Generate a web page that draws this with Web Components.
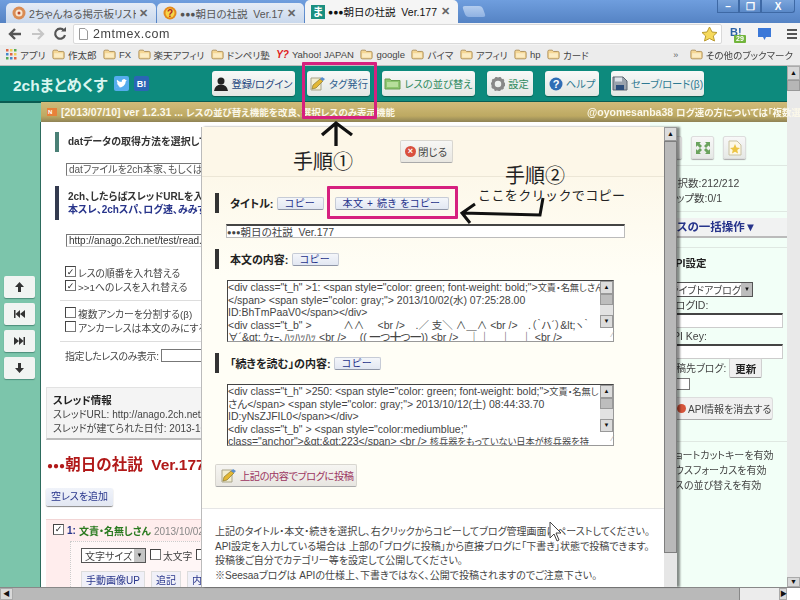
<![CDATA[<!DOCTYPE html>
<html lang="ja"><head><meta charset="utf-8"><title>2chまとめくす</title>
<style>
html,body{margin:0;padding:0;background:#fff;overflow:hidden}
body{font:10px "Liberation Sans","Noto Sans CJK JP",sans-serif;color:#333}
</style></head><body>
<x-app>
  <x-tabs></x-tabs>
  <x-toolbar></x-toolbar>
  <x-bookmarks></x-bookmarks>
  <x-page></x-page>
  <x-hscroll></x-hscroll>
  <x-modal></x-modal>
  <x-notes></x-notes>
</x-app>
<script>
const FONT='"Liberation Sans","Noto Sans CJK JP",sans-serif';
const def=(n,css,html)=>customElements.define(n,class extends HTMLElement{constructor(){super();this.attachShadow({mode:'open'}).innerHTML=`<style>${css}</style>${html}`}});
const folder=`<svg width="13" height="11" viewBox="0 0 15 12" style="display:block"><path d="M1 2.5Q1 1 2.5 1H6L7.5 2.5H12.5Q14 2.5 14 4V9.5Q14 11 12.5 11H2.5Q1 11 1 9.5Z" fill="#f5d795" stroke="#a98a52"/><rect x="2.5" y="4.5" width="10" height="5" fill="#fcecc3"/></svg>`;
const pen=`<svg width="17" height="16" viewBox="0 0 17 16" style="display:block;flex:none"><path d="M2 2H12V14H2Z" fill="#f2edd0" stroke="#a9a58a"/><path d="M3 13 4 9 11 3 14 5 7 12Z" fill="#e3b733" stroke="#8a7a33" stroke-width=".7"/><path d="M11 3 13 1 16 3 14 5Z" fill="#5b8ecc"/></svg>`;
const bar=(c,h,extra='')=>`<i style="display:block;width:4px;height:${h}px;background:${c};flex:none;${extra}"></i>`;
const dots=s=>`<span style="font-size:${s}px;vertical-align:1px">●●●</span>`;
const cjk=(t,s=9.5)=>`<span style="font-size:${s}px">${t}</span>`;

def('x-app',`:host{display:flex;flex-direction:column;position:relative;width:800px;height:600px;overflow:hidden;filter:blur(.35px);font:10px ${FONT};font-feature-settings:"palt";color:#333}`,`<slot></slot>`);

def('x-tab',`:host{display:flex;align-items:center;gap:3px;box-sizing:border-box;height:20px;padding:0 8px 0 6px;background:linear-gradient(#e5ecf6,#c9d8ec);border-radius:5px 5px 0 0;font-size:10.500px;color:#555;white-space:nowrap;overflow:hidden}
:host([active]){background:#f5f5f5;color:#111;height:23px}
.t{flex:1;overflow:hidden}.x{font-size:11px;font-weight:bold;color:#666;flex:none}`,`<slot name="i"></slot><span class="t"><slot></slot></span><span class="x">✕</span>`);

def('x-tabs',`:host{display:flex;align-items:flex-end;height:23px;background:linear-gradient(#6f9ede,#5583c4);padding-left:6px;box-sizing:border-box;flex:none;position:relative}
x-tab{width:150px;margin-right:1px}
x-tab.c{width:147px;margin-right:1px}
x-tab[active]{width:153px;margin-right:3px}
.new{width:20px;height:11px;margin:0 0 6px 3px;background:linear-gradient(#b4cdee,#8fb1e2);border-radius:3px;transform:skewX(20deg)}
.win{position:absolute;right:5px;top:0;display:flex;height:13px}
.win span{display:flex;align-items:center;justify-content:center;width:22px;height:13px;background:linear-gradient(#7ba5dc,#5a89c8);border:1px solid #3e69a5;border-top:0;box-sizing:border-box;color:#fff;font-size:10px;font-weight:bold}
.win .c2{width:34px;border-radius:0 0 3px 0;background:linear-gradient(#7ba5dc,#5a89c8)}`,
`<x-tab><svg slot="i" width="14" height="14" viewBox="0 0 14 14"><circle cx="7" cy="7" r="6.5" fill="#d98c54"/><circle cx="7" cy="7" r="3.5" fill="#f8e6cf"/><circle cx="7" cy="7" r="1.5" fill="#b9482e"/></svg>2ちゃんねる掲示板リスト</x-tab>
<x-tab class="c"><svg slot="i" width="14" height="14" viewBox="0 0 14 14"><circle cx="7" cy="7" r="6.5" fill="#e48a1c"/><circle cx="7" cy="7" r="4.5" fill="#f7d54a"/><text x="7" y="10.5" text-anchor="middle" font-size="10" font-weight="bold" fill="#b3261e" font-family="Liberation Sans">?</text></svg>${dots(8.5)}朝日の社説&nbsp; Ver.177</x-tab>
<x-tab class="c" active><svg slot="i" width="14" height="14" viewBox="0 0 14 14"><rect width="14" height="14" fill="#1a8f80"/><text x="7" y="11" text-anchor="middle" font-size="11" font-weight="bold" fill="#fff" font-family="Noto Sans CJK JP">ま</text></svg>${dots(8.5)}朝日の社説&nbsp; Ver.177</x-tab>
<div class="new"></div>
<div class="win"><span>–</span><span>❐</span><span class="c2">X</span></div>`);

def('x-toolbar',`:host{display:flex;align-items:center;height:22px;background:#f4f4f4;flex:none;box-sizing:border-box;padding-left:7px}
svg{flex:none}.nav{display:flex;gap:7px;width:66px;flex:none;align-items:center}
.addr{display:flex;align-items:center;gap:5px;box-sizing:border-box;width:649px;height:20px;background:#fff;border:1px solid #d9d9d9;border-radius:2px;padding-left:5px;font-size:12.5px;color:#444;letter-spacing:.55px;position:relative;flex:none}
.star{position:absolute;right:3px;top:1px}
.r{display:flex;align-items:center;margin-left:8px;gap:11px}
.badge{position:relative;font:bold 11px "Liberation Sans";color:#2c62a6;width:16px;height:16px}
.badge b{position:absolute;left:4px;top:9px;background:#72b53c;color:#fff;font-size:7px;padding:0 2px;line-height:8px;border-radius:1px}`,
`<div class="nav">
<svg width="16" height="14" viewBox="0 0 16 14"><path d="M14 7H4M8 2 3 7l5 5" fill="none" stroke="#555" stroke-width="2.4"/></svg>
<svg width="16" height="14" viewBox="0 0 16 14"><path d="M2 7H12M8 2l5 5-5 5" fill="none" stroke="#c6c6c6" stroke-width="2.2"/></svg>
<svg width="14" height="14" viewBox="0 0 14 14"><path d="M12 8A5 5 0 1 1 11 3.5" fill="none" stroke="#555" stroke-width="2.2"/><path d="M8 4.5H13V0Z" fill="#555"/></svg></div>
<div class="addr"><svg width="9" height="12" viewBox="0 0 9 12"><path d="M.5.5H6L8.500 3V11.500H.5Z" fill="#fff" stroke="#999"/></svg>2mtmex.com
<svg class="star" width="17" height="16" viewBox="0 0 17 16"><path d="M8.500 1 11 6 16 6.500 12.300 10 13.500 15 8.500 12.500 3.500 15 4.700 10 1 6.500 6 6Z" fill="#f6d95b" stroke="#b99a2e"/></svg></div>
<div class="r"><span class="badge">B!<b>29</b></span>
<svg width="15" height="14" viewBox="0 0 15 14"><path d="M1 1H14V10H9L7.500 13 6 10H1Z" fill="#3b78d8"/></svg>
<svg width="12" height="12" viewBox="0 0 12 12" style="margin-left:3px"><path d="M1 2H11M1 6H11M1 10H11" stroke="#555" stroke-width="2.200"/></svg></div>`);

def('x-bm',`:host{display:flex;align-items:center;gap:3px;font-size:9.500px;color:#444;white-space:nowrap;flex:none}`,`<slot name="i"></slot><slot></slot>`);
def('x-bookmarks',`:host{display:flex;align-items:center;height:21px;background:#ececec;flex:none;box-sizing:border-box;padding:0 7px 1px 6px;gap:6.500px;border-bottom:1px solid #bdbdbd}
.sp{flex:1}.more{font-size:9px;color:#666;margin-right:5px}`,
`<x-bm><svg slot="i" width="11" height="11" viewBox="0 0 11 11"><rect width="2.500" height="2.500" fill="#d64"/><rect x="4" width="2.500" height="2.500" fill="#ec5"/><rect x="8" width="2.500" height="2.500" fill="#5a5"/><rect y="4" width="2.500" height="2.500" fill="#48c"/><rect x="4" y="4" width="2.500" height="2.500" fill="#d64"/><rect x="8" y="4" width="2.500" height="2.500" fill="#ec5"/><rect y="8" width="2.500" height="2.500" fill="#5a5"/><rect x="4" y="8" width="2.500" height="2.500" fill="#48c"/><rect x="8" y="8" width="2.500" height="2.500" fill="#d64"/></svg>アプリ</x-bm>
<x-bm><span slot="i">${folder}</span>作太郎</x-bm><x-bm><span slot="i">${folder}</span>FX</x-bm><x-bm><span slot="i">${folder}</span>楽天アフィリ</x-bm><x-bm><span slot="i">${folder}</span>ドンペリ塾</x-bm>
<x-bm><b slot="i" style="color:#e0201b;font:italic bold 10px 'Liberation Sans'">Y?</b>Yahoo! JAPAN</x-bm>
<x-bm><span slot="i">${folder}</span>google</x-bm><x-bm><span slot="i">${folder}</span>バイマ</x-bm><x-bm><span slot="i">${folder}</span>アフィリ</x-bm><x-bm><span slot="i">${folder}</span>hp</x-bm><x-bm><span slot="i">${folder}</span>カード</x-bm>
<span class="sp"></span><span class="more">»</span><x-bm><span slot="i">${folder}</span>その他のブックマーク</x-bm>`);

def('x-hbtn',`:host{display:inline-flex;align-items:center;justify-content:center;gap:3px;box-sizing:border-box;height:25px;background:linear-gradient(#f8f9f8,#e2e7e4);border-radius:3px;box-shadow:0 1px 1px #0a5a50;font-size:10.300px;color:var(--c,#1c6a74);white-space:nowrap}`,`<slot name="i"></slot><slot></slot>`);
def('x-sitehead',`:host{display:flex;align-items:center;height:36px;background:#0d8a7d;box-sizing:border-box;border-bottom:1px solid #0a5c52;flex:none;position:relative}
.logo{font-size:15.500px;font-weight:bold;color:#d8f5ef;margin-left:13px;width:101px;white-space:nowrap;flex:none}
.soc{display:inline-flex;width:15px;height:15px;background:#55acee;border-radius:2px;align-items:center;justify-content:center;flex:none}
.h{background:#2a65b5;color:#fff;font:bold 9px "Liberation Sans";margin-left:5px}
.btns{display:flex;margin-left:63px;gap:12px}`,
`<span class="logo">2chまとめくす</span>
<span class="soc"><svg width="11" height="9" viewBox="0 0 11 9"><path d="M0 8Q4 9.500 7.500 7 10 4.500 9.800 2L11 1 9.700 1.100Q8.500-.5 6.800.5 5.300 1.500 5.800 3 3 3 1 .7.300 3 2 4.300L1 4Q1.300 6 3 6.500L2 6.600Q3 8 4 8 2 9 0 8Z" fill="#fff"/></svg></span>
<span class="soc h">B!</span>
<div class="btns">
<x-hbtn style="width:83px;--c:#26477f"><svg slot="i" width="14" height="14" viewBox="0 0 14 14" style="flex:none"><circle cx="7" cy="4" r="3.500" fill="#222"/><path d="M0 14Q1 7.500 7 7.500T14 14Z" fill="#222"/></svg>登録/ログイン</x-hbtn>
<x-hbtn style="width:63px;--c:#2e5f8e"><span slot="i">${pen}</span>タグ発行</x-hbtn>
<x-hbtn style="width:93px;--c:#2f8a5e"><svg slot="i" width="17" height="13" viewBox="0 0 17 13"><path d="M1 2H6L7 3.500H16V12H1Z" fill="#8dc66f" stroke="#6a9e52"/><rect x="3" y="5" width="11" height="5" fill="#b7de9c"/></svg>レスの並び替え</x-hbtn>
<x-hbtn style="width:46px;--c:#2f8a5e"><svg slot="i" width="14" height="14" viewBox="0 0 14 14"><circle cx="7" cy="7" r="5" fill="none" stroke="#888" stroke-width="3.500"/><circle cx="7" cy="7" r="6.600" fill="none" stroke="#888" stroke-width="1.400" stroke-dasharray="2 2"/></svg>設定</x-hbtn>
<x-hbtn style="width:54px;--c:#2f7a92"><svg slot="i" width="14" height="14" viewBox="0 0 14 14"><circle cx="7" cy="7" r="6.500" fill="#2f6db5"/><text x="7" y="11" text-anchor="middle" fill="#fff" font-size="11" font-weight="bold" font-family="Liberation Sans">?</text></svg>ヘルプ</x-hbtn>
<x-hbtn style="width:93px;--c:#2f7a92"><svg slot="i" width="16" height="15" viewBox="0 0 16 15" style="flex:none"><path d="M1 1H11L15 5V14H1Z" fill="#9aa3ad" stroke="#5a6470"/><rect x="4" y="9" width="8" height="5" fill="#2c4f7c"/><rect x="3" y="1.500" width="7" height="4" fill="#dfe4ea"/></svg>セーブ/ロード(β)</x-hbtn>
</div>`);

def('x-news',`:host{display:flex;align-items:center;box-sizing:border-box;height:20px;background:linear-gradient(#d0bb7a,#bda962 70%,#8f8355);padding:0 0 1px 6px;font-size:10.500px;font-weight:bold;color:#fbf8ea;white-space:nowrap;overflow:hidden;flex:none;gap:4px}
.n{background:#e8813a;color:#fff;font-size:6px;padding:1px;width:10px;overflow:hidden;box-sizing:border-box;height:8px;line-height:6px;flex:none}
.r{position:absolute;left:587px}`,`<span class="n">N</span><span>[2013/07/10] ver 1.2.31 ... ${cjk('レスの並び替え機能を改良、選択レスのみ表示機能')}</span><span class="r">@oyomesanba38 ${cjk('ログ速の方については「複数選択」')}</span>`);

def('x-rail',`:host{display:flex;flex-direction:column;justify-content:flex-start;gap:5px;box-sizing:border-box;width:41px;background:#7cc5ab;border-right:1px solid #2d6b5d;padding:154px 0 0 4px;flex:none}
span{display:flex;align-items:center;justify-content:center;width:31px;height:22px;background:#f1f4f2;border-radius:2px;box-shadow:0 1px 1px #4d8d7a}`,
`<span><svg width="9" height="10" viewBox="0 0 9 10"><path d="M4.500 0 9 5H6V10H3V5H0Z" fill="#333"/></svg></span>
<span><svg width="11" height="8" viewBox="0 0 11 8"><path d="M0 0H1.500V8H0ZM6 0V8L1.500 4ZM11 0V8L6 4Z" fill="#333"/></svg></span>
<span><svg width="11" height="8" viewBox="0 0 11 8"><path d="M11 0H9.500V8H11ZM5 0V8L9.500 4ZM0 0V8L5 4Z" fill="#333"/></svg></span>
<span><svg width="9" height="10" viewBox="0 0 9 10"><path d="M4.500 10 9 5H6V0H3V5H0Z" fill="#333"/></svg></span>`);

def('x-check',`:host{display:flex;align-items:center;gap:2px;font-size:9.800px;color:#444;white-space:nowrap;height:14px}
i{width:9px;height:9px;border:1px solid #777;border-top-color:#444;border-left-color:#444;background:#fff;display:flex;align-items:center;justify-content:center;flex:none;margin-top:-3px;font:bold 9px "DejaVu Sans";color:#222}`,`<i id="b"></i><slot></slot>`);

def('x-main',`:host{display:block;box-sizing:border-box;width:609px;flex:none;background:#fff;padding:10px 0 0 5px;overflow:hidden;font-size:10px;color:#444}
.row{display:flex;gap:5px;margin:0 0 0 9px;font-weight:bold;color:#333;white-space:nowrap;line-height:13px}
.sel{box-sizing:border-box;margin:11px 0 10px 20px;width:400px;height:13px;border:1px solid #777;border-right-color:#ccc;border-bottom-color:#ccc;font-size:10px;color:#555;line-height:11px;padding-left:2px;white-space:nowrap;overflow:hidden}
.inp{margin:14px 0 19px 20px;color:#333}
a{color:#27348b;font-weight:bold}
.checks{margin-left:19px}
.hr{border-top:1px solid #ddd;margin:6px 0 6px 14px}
.filter{margin:1px 0 0 19px;display:flex;align-items:center;gap:2px;font-size:10px;height:14px;letter-spacing:-.4px}
.filter i{display:inline-block;width:60px;height:11px;border:1px solid #777}
.info{margin:25px 0 0 0;box-sizing:border-box;height:53px;padding:5px 6px;background:#f4f4f4;border:1px solid #e2e2e2;border-bottom:2px solid #bbb;font-size:10px;line-height:14.500px;white-space:nowrap}
.info b{display:block;color:#222;font-size:10.500px}
h1{margin:13px 0 10px 1px;font:bold 15.500px/24px ${FONT};color:#b11919;white-space:nowrap}
.empty{display:inline-block;padding:0 5px;height:18px;line-height:18px;background:linear-gradient(#f0f3fa,#e2e7f2);box-shadow:0 1px 1px #888;color:#27348b;font-size:10px;border-radius:2px}
.res{margin-top:13px;background:#ffeded;padding:3px 0 0 7px;height:70px;box-sizing:border-box;border-top:1px solid #f2d5d5}
.hd{display:flex;gap:3px;align-items:center;white-space:nowrap;font-weight:bold;color:#2a7a1f;font-size:10px}
.hd .n{color:#27348b}.hd .d{color:#888;font-weight:normal;font-size:10px}
.inner{margin:3px 0 0 17px;background:#fff6f6;border:1px dotted #ccc;padding:6px 10px;height:50px;box-sizing:border-box}
.l{display:flex;align-items:center;gap:4px;white-space:nowrap}
.s{box-sizing:border-box;width:65px;height:15px;border:1px solid #555;background:#fff;display:flex;align-items:center;justify-content:space-between;font-size:10px;padding-left:3px;color:#444}
.s u{width:11px;height:13px;background:#c4c4c4;text-decoration:none;font-size:6px;text-align:center;line-height:13px;color:#111}
.b{display:flex;gap:6px;margin-top:8px}
.b span{background:#f0f0f8;padding:0 4px;height:17px;line-height:17px;color:#27348b;border:1px solid #ddd;box-sizing:border-box;font-size:10px}`,
`<div class="row">${bar('#4a8076',20)}<span style="margin-left:4px;line-height:20px">datデータの取得方法を選択してください</span></div>
<div class="sel">datファイルを2ch本家、もしくは他のサイトから取得する</div>
<div class="row" style="align-items:flex-start">${bar('#333a4f',34)}<span style="margin-left:4px;padding-top:4px">2ch、したらばスレッドURLを入力してください<br><a>本スレ、2chスパ、ログ速、みみずん</a></span></div>
<div class="sel inp">http://anago.2ch.net/test/read.cgi/bookall/1380666328/</div>
<div class="checks"><x-check>レスの順番を入れ替える</x-check><x-check>&gt;&gt;1へのレスを入れ替える</x-check></div>
<div class="hr"></div>
<div class="checks"><x-check class="off">複数アンカーを分割する(β)</x-check><x-check class="off">アンカーレスは本文のみにする</x-check></div>
<div class="hr"></div>
<div class="filter">指定したレスのみ表示: <i></i></div>
<div class="info"><b>スレッド情報</b>スレッドURL: http://anago.2ch.net/test/read.cgi/bookall/1380666328/<br>スレッドが建てられた日付: 2013-10-02</div>
<h1>${dots(10)}朝日の社説&nbsp; Ver.177</h1>
<span class="empty">空レスを追加</span>
<div class="res"><div class="hd"><x-check id="c1"></x-check><span class="n">1:</span><span>文責・名無しさん</span><span class="d">2013/10/02(水) 07:25:28.00</span></div>
<div class="inner"><div class="l"><div class="s">文字サイズ<u>▼</u></div><x-check class="off">太文字</x-check><x-check class="off">色</x-check></div>
<div class="b"><span>手動画像UP</span><span>追記</span><span>内容編集</span></div></div></div>`);

def('x-right',`:host{display:block;box-sizing:border-box;width:137px;flex:none;background:#f2fff7;padding:14px 4px 0 16px;font-size:10.500px;color:#444;overflow:hidden}
.ic{display:flex;gap:9px;height:23px}
.ic span{display:flex;align-items:center;justify-content:center;width:23px;height:23px;background:linear-gradient(#f8f8f8,#e6e9e6);border:1px solid #ddd;box-sizing:border-box;border-radius:2px;box-shadow:0 1px 1px #aaa;flex:none}
.ic span:first-child{margin-left:-7px}
.hr{border-top:1px solid #dfe8e2;margin:0 -4px 0 -16px}
.stat{line-height:15px;margin:10px 0 5px 1px;white-space:nowrap}
.bulk{margin:6px -4px 9px -16px;padding-left:16px;height:18px;background:#f1f2f2;border-bottom:2px solid #bbb;color:#27348b;font-weight:bold;font-size:11.500px;line-height:18px;white-space:nowrap}
h4{margin:8px 0 12px 2px;font:bold 10.500px/14px ${FONT};color:#222;}
.sel{display:flex;box-sizing:border-box;width:87px;height:15px;border:1px solid #555;background:#fff;align-items:center;justify-content:space-between;font-size:10px;padding-left:3px;white-space:nowrap;overflow:hidden}
.sel u{width:12px;height:13px;background:#bdbdbd;text-decoration:none;font-size:6px;text-align:center;line-height:13px;color:#111;flex:none}
label{display:block;line-height:15px;margin-top:1px;white-space:nowrap}
.in{display:block;box-sizing:border-box;height:15px;border:1px solid #ccc;border-top:2px solid #444;background:#fff;width:117px;margin:0 0 1px}
.upd{display:flex;align-items:center;white-space:nowrap;height:19px;margin-top:-2px;font-size:10px}
.upd b{display:inline-block;width:33px;text-align:center;margin-left:3px;height:20px;line-height:20px;background:#f0f0f0;border:1px solid #d0d0d0;border-bottom-color:#999;border-radius:2px;color:#222;font-size:10.500px;box-sizing:border-box}
.ss{display:block;width:24px;height:12px;border:1px solid #777;margin:1px 0 7px;box-sizing:border-box;background:#fff}
.del{display:flex;align-items:center;gap:2px;width:107px;height:23px;box-sizing:border-box;background:#f0f0f0;border:1px solid #ddd;border-bottom-color:#aaa;border-radius:3px;white-space:nowrap;font-size:10px;padding-left:10px}
.del i{width:9px;height:9px;border-radius:50%;background:#d5533a;flex:none}
.lines{margin-top:6px;line-height:15px;white-space:nowrap;font-size:10px}`,
`<div class="ic"><span></span><span><svg width="16" height="14" viewBox="0 0 16 14"><path d="M1 1H6L4.500 2.500 7 5 5 7 2.500 4.500 1 6ZM15 1H10L11.500 2.500 9 5 11 7 13.500 4.500 15 6ZM1 13H6L4.500 11.500 7 9 5 7 2.500 9.500 1 8ZM15 13H10L11.500 11.500 9 9 11 7 13.500 9.500 15 8Z" fill="#6ba35e"/></svg></span>
<span><svg width="14" height="16" viewBox="0 0 14 16"><path d="M1 1H9L13 5V15H1Z" fill="#fdf8e6" stroke="#c9c2a3"/><path d="M7 4 8.500 7.500 12 8 9.300 10 10 13.500 7 11.700 4 13.500 4.700 10 2 8 5.500 7.500Z" fill="#ecc443"/></svg></span></div>
<div class="hr" style="margin-top:6px"></div>
<div class="stat">選択数:212/212<br>ラップ数:0/1</div>
<div class="hr"></div>
<div class="bulk">レスの一括操作▼</div>
<div class="hr"></div>
<h4>API設定</h4>
<div class="sel">ライブドアブログ<u>▼</u></div>
<label>ブログID:</label><span class="in"></span>
<label style="margin-top:0">API Key:</label><span class="in"></span>
<div class="upd">投稿先ブログ:<b>更新</b></div>
<span class="ss"></span>
<div class="del"><i></i>API情報を消去する</div>
<div class="hr" style="margin-top:21px"></div>
<div class="lines">ショートカットキーを有効<br>マウスフォーカスを有効<br>レスの並び替えを有効</div>`);

def('x-vscroll',`:host{display:flex;flex-direction:column;box-sizing:border-box;width:13px;height:521px;background:#e9e9e9;flex:none}
.a{height:14px;background:#d7d7d7;border:1px solid #aaa;box-sizing:border-box;font-size:7px;line-height:12px;text-align:center;color:#111}
.t{height:11px;background:#b6b6b6;border:1px solid #999;box-sizing:border-box}
.s{flex:1}`,`<div class="a">▲</div><div class="t"></div><div class="s"></div><div class="a" style="height:10px;line-height:8px">▼</div>`);

def('x-page',`:host{display:flex;flex:1;min-height:0;overflow:hidden}
.c{width:787px;flex:none;display:flex;flex-direction:column;min-height:0}
.n{display:flex;flex:none;position:relative}
.gap{width:41px;background:#7cc5ab;flex:none;border-top:1px solid #0a5c52;box-sizing:border-box}
x-news{width:746px}
.r{display:flex;flex:1;min-height:0}`,
`<div class="c"><x-sitehead></x-sitehead><div class="n"><div class="gap"></div><x-news></x-news></div>
<div class="r"><x-rail></x-rail><x-main></x-main><x-right></x-right></div></div><x-vscroll></x-vscroll>`);

def('x-hscroll',`:host{display:flex;align-items:stretch;height:13px;background:#ececec;flex:none;border-top:1px solid #888;box-sizing:border-box}
.a{width:13px;background:#d9d9d9;border:1px solid #aaa;box-sizing:border-box;font-size:7px;line-height:10px;text-align:center;color:#111;flex:none}
.t{width:727px;background:#b9b9b9;border-right:1px solid #888;box-sizing:border-box;flex:none}
.s{flex:1}.e{width:13px;background:#fff;flex:none}`,`<div class="a">◀</div><div class="t"></div><div class="s"></div><div class="a" style="width:8px">▶</div><div class="e"></div>`);

def('x-copy',`:host{display:inline-block;box-sizing:border-box;height:13px;line-height:12px;text-align:center;background:linear-gradient(#f4f6fa,#e2e7f2);border:1px solid #c6cbd6;border-bottom-color:#8e95a6;border-radius:2px;font-size:10px;font-weight:normal;color:#27348b;width:47px;white-space:nowrap;letter-spacing:.6px}`,`<slot></slot>`);
def('x-area',`:host{display:flex;box-sizing:border-box;width:387px;height:62px;background:#fff;border:1px solid #999;border-top:1px solid #444;border-left:1px solid #444;font-size:10.500px;color:#444}
.t{flex:1;min-width:0;line-height:12.200px;overflow:hidden;white-space:nowrap}
.sb{width:13px;background:#e2e2e2;display:flex;flex-direction:column;flex:none;position:relative}
.a{height:13px;background:#dcdcdc;border:1px solid #999;box-sizing:border-box;font-size:6px;line-height:11px;text-align:center;color:#111}
.th{height:11px;background:#bdbdbd;border:1px solid #999;box-sizing:border-box}
.sp{flex:1}.g{height:13px;background:#fff;font-size:8px;color:#aaa;text-align:right;line-height:13px}`,
`<div class="t"><slot></slot></div><div class="sb"><div class="a">▲</div><div class="th"></div><div class="sp"></div><div class="a">▼</div><div class="g">∕</div></div>`);

def('x-modal',`:host{position:absolute;left:201px;top:127px;width:476px;height:460px;box-sizing:border-box;background:#fffdf5;border-left:1px solid #bbb;box-shadow:3px 0 2px rgba(0,0,0,.45);display:flex;font-size:10.500px;color:#333;overflow:hidden}
.body{flex:1;min-width:0;display:flex;flex-direction:column}
.bar{width:13px;height:460px;background:#e6e6e6;display:flex;flex-direction:column;flex:none}
.bar .a{height:14px;background:#dcdcdc;border:1px solid #999;box-sizing:border-box;font-size:7px;text-align:center;line-height:12px;color:#111}
.bar .th{height:412px;background:#b9b9b9;border:1px solid #7f7f7f;box-sizing:border-box}
.hd{height:50px;background:#fdf7e8;border-bottom:1px solid #ece6d6;box-sizing:border-box;display:flex;align-items:flex-start;justify-content:center;padding:13px 14px 0 0;flex:none}
.close{display:flex;align-items:center;gap:2px;width:53px;height:23px;justify-content:center;background:linear-gradient(#f7f7f5,#e9e7e1);border:1px solid #d8d6d0;border-bottom-color:#aaa;box-sizing:border-box;border-radius:2px;color:#444;font-size:10.500px}
.close i{width:11px;height:11px;border-radius:50%;background:#d9503f;color:#fff;font:bold 9px/11px "Liberation Sans";text-align:center}
.main{background:linear-gradient(#fdf8ea,#fffef6 30%);padding:16px 0 0 13px;box-sizing:border-box;height:331px;flex:none}
.sec{display:flex;align-items:center;height:20px;gap:11px;font-weight:bold;font-size:11px;white-space:nowrap;color:#222}
.in{display:block;box-sizing:border-box;width:399px;height:14px;margin:11px 0 11px 11px;background:#fff;border:1px solid #bbb;border-top:2px solid #444;font-size:10.500px;line-height:12px;white-space:nowrap;color:#444}
.post{display:flex;align-items:center;gap:3px;width:142px;height:23px;margin-top:18px;box-sizing:border-box;background:linear-gradient(#f6f5f2,#e8e6e1);border:1px solid #d8d6d0;border-bottom-color:#aaa;border-radius:2px;color:#9c3560;font-size:10.200px;letter-spacing:-.4px;padding-left:4px;white-space:nowrap}
.foot{flex:1;background:#fff;border-top:1px solid #e6e6e6;padding:16px 0 0 13px;box-sizing:border-box;font-size:10px;line-height:14.500px;color:#444;white-space:nowrap;overflow:hidden}`,
`<div class="body"><div class="hd"><div class="close"><i>×</i>閉じる</div></div>
<div class="main">
<div class="sec">${bar('#333',20)}タイトル: <x-copy style="margin-left:-8px">コピー</x-copy><x-copy style="width:114px;margin-left:0">本文 + 続き をコピー</x-copy></div>
<div class="in">${dots(7.5)}朝日の社説&nbsp; Ver.177</div>
<div class="sec">${bar('#333',20)}本文の内容: <x-copy style="margin-left:-8px">コピー</x-copy></div>
<x-area style="margin-top:11px;margin-left:12px">&lt;div class="t_h" &gt;1: &lt;span style="color: green; font-weight: bold;"&gt;${cjk('文責・名無しさん',9.2)}<br>&lt;/span&gt; &lt;span style="color: gray;"&gt; 2013/10/02(水) 07:25:28.00<br>ID:BhTmPaaV0&lt;/span&gt;&lt;/div&gt;<br>&lt;div class="t_b" &gt;　　　∧∧　 &lt;br /&gt;　.／ 支＼ ∧＿∧ &lt;br /&gt;　.（｀ハ´）&amp;lt;ヽ｀<br>∀´&amp;gt; ｳｪｰ､ﾊｯﾊｯﾊｯ &lt;br /&gt;　 (( ━つ╋つ━)) &lt;br /&gt;　｜｜　｜　｜ &lt;br /&gt;</x-area>
<div class="sec" style="margin-top:11px">${bar('#333',20)}「続きを読む」の内容: <x-copy style="margin-left:-8px">コピー</x-copy></div>
<x-area style="margin-top:11px;margin-left:12px">&lt;div class="t_h" &gt;250: &lt;span style="color: green; font-weight: bold;"&gt;${cjk('文責・名無し',9.2)}<br>さん&lt;/span&gt; &lt;span style="color: gray;"&gt; 2013/10/12(土) 08:44:33.70<br>ID:yNsZJFIL0&lt;/span&gt;&lt;/div&gt;<br>&lt;div class="t_b" &gt; &lt;span style="color:mediumblue;"<br>class="anchor"&gt;&amp;gt;&amp;gt;223&lt;/span&gt; &lt;br /&gt; ${cjk('核兵器をもっていない日本が核兵器を持',9.2)}</x-area>
<div class="post">${pen}上記の内容でブログに投稿</div>
</div>
<div class="foot">上記のタイトル・本文・続きを選択し、右クリックからコピーしてブログ管理画面にペーストしてください。<br>API設定を入力している場合は 上部の「ブログに投稿」から直接ブログに「下書き」状態で投稿できます。<br>投稿後ご自分でカテゴリー等を設定して公開してください。<br>※Seesaaブログは APIの仕様上、下書きではなく、公開で投稿されますのでご注意下さい。</div>
</div>
<div class="bar"><div class="a">▲</div><div class="th"></div></div>`);

def('x-notes',`:host{position:absolute;left:0;top:0;width:800px;height:600px;pointer-events:none;display:block}
.p{position:absolute;box-sizing:border-box;border:3px solid #d6207f;border-radius:1px}
.t{position:absolute;font:20px "Liberation Serif","Noto Sans CJK JP",serif;font-feature-settings:normal;color:#222;white-space:nowrap}
.s{position:absolute;font:13px "Noto Sans CJK JP",sans-serif;font-feature-settings:normal;letter-spacing:.4px;color:#222;white-space:nowrap}
svg{position:absolute;left:0;top:0}`,
`<div class="p" style="left:302px;top:62px;width:75px;height:57px"></div>
<div class="p" style="left:327px;top:186px;width:131px;height:33px"></div>
<svg width="800" height="600" viewBox="0 0 800 600" fill="none" stroke="#111" stroke-width="3">
<path d="M336 146V123M322 135 336 123 352 135" stroke-width="3.300"/>
<path d="M543 198 540 215 462 213M475 204 462 213 470 223" />
<path d="M550 522V538L554 534 557 541 559 540 556 533 561 533Z" fill="#fff" stroke="#444" stroke-width="1"/>
</svg>
<span class="t" style="left:293px;top:146px">手順①</span>
<span class="t" style="left:505px;top:160px">手順②</span>
<span class="s" style="left:478px;top:185px">ここをクリックでコピー</span>`);

function tick(root){root.querySelectorAll('*').forEach(e=>{if(e.shadowRoot)tick(e.shadowRoot);if(e.tagName==='X-CHECK'&&!e.classList.contains('off'))e.shadowRoot.getElementById('b').textContent='✓'})}
tick(document);
</script>
</body></html>]]>
